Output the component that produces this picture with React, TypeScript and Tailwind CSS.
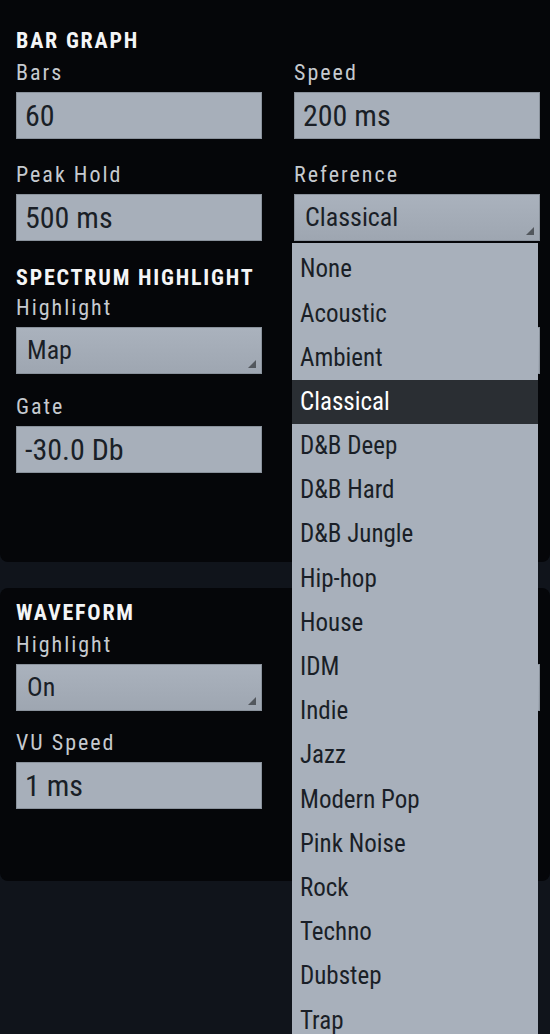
import React from "react";

const GENRES = [
  "None",
  "Acoustic",
  "Ambient",
  "Classical",
  "D&B Deep",
  "D&B Hard",
  "D&B Jungle",
  "Hip-hop",
  "House",
  "IDM",
  "Indie",
  "Jazz",
  "Modern Pop",
  "Pink Noise",
  "Rock",
  "Techno",
  "Dubstep",
  "Trap",
];

function Heading({ children, className = "" }: { children: React.ReactNode; className?: string }) {
  return (
    <h2 className={`h-[24px] text-[22px] leading-[24px] font-bold tracking-[1.8px] text-[#f4f5f6] ${className}`}>
      {children}
    </h2>
  );
}

function Field({ label, children }: { label: string; children: React.ReactNode }) {
  return (
    <div>
      <div className="mb-[7px] h-[24px] text-[22px] leading-[24px] tracking-[2px] text-[#c6cacf]">{label}</div>
      {children}
    </div>
  );
}

function Input({ value }: { value: string }) {
  return (
    <div className="flex h-[47px] w-[246px] items-center border border-[#8a929c] bg-[#a7afba] pl-[8px] text-[30px] text-[#1a1f27]">
      {value}
    </div>
  );
}

function Corner() {
  return (
    <svg className="absolute right-[5px] bottom-[5px]" width="8" height="8" viewBox="0 0 8 8">
      <polygon points="8,0 8,8 0,8" fill="#52575d" />
    </svg>
  );
}

function Select({ value, open = false }: { value: string; open?: boolean }) {
  return (
    <div className="relative">
      <div className="relative flex h-[47px] w-[246px] items-center border border-[#8a929c] bg-gradient-to-b from-[#aab2bd] to-[#9ea6b1] pl-[10px] text-[26px] text-[#1a1f27]">
        {value}
        <Corner />
      </div>
      {open && (
        <ul className="absolute top-[49px] left-[-2px] z-10 w-[246px] bg-[#a8b0bb] pt-[4px] text-[25px] text-[#1a1f27]">
          {GENRES.map((g) => (
            <li
              key={g}
              className={`flex h-[44.2px] items-center pl-[8px] ${g === value ? "bg-[#2a2e33] text-white" : ""}`}
            >
              {g}
            </li>
          ))}
        </ul>
      )}
    </div>
  );
}

export default function App() {
  return (
    <div className="h-[1034px] overflow-hidden bg-[#10141b] font-['Roboto_Condensed','DejaVu_Sans_Condensed','Liberation_Sans_Narrow',Roboto,sans-serif]">
      <section className="h-[562px] rounded-b-lg bg-[#050609] pt-[29px] pl-4">
        <Heading>BAR GRAPH</Heading>
        <div className="mt-[8px] grid grid-cols-[246px_246px] gap-x-8 gap-y-[24px]">
          <Field label="Bars">
            <Input value="60" />
          </Field>
          <Field label="Speed">
            <Input value="200 ms" />
          </Field>
          <Field label="Peak Hold">
            <Input value="500 ms" />
          </Field>
          <Field label="Reference">
            <Select value="Classical" open />
          </Field>
        </div>

        <Heading className="mt-[25px]">SPECTRUM HIGHLIGHT</Heading>
        <div className="mt-[6px] grid grid-cols-[246px_246px] gap-x-8 gap-y-[21px]">
          <Field label="Highlight">
            <Select value="Map" />
          </Field>
          <Field label="">
            <Select value="" />
          </Field>
          <Field label="Gate">
            <Input value="-30.0 Db" />
          </Field>
        </div>
      </section>

      <section className="mt-[26px] h-[293px] rounded-lg bg-[#050609] pt-[13px] pl-4">
        <Heading>WAVEFORM</Heading>
        <div className="mt-[8px] grid grid-cols-[246px_246px] gap-x-8 gap-y-[20px]">
          <Field label="Highlight">
            <Select value="On" />
          </Field>
          <Field label="">
            <Select value="" />
          </Field>
          <Field label="VU Speed">
            <Input value="1 ms" />
          </Field>
        </div>
      </section>
    </div>
  );
}
